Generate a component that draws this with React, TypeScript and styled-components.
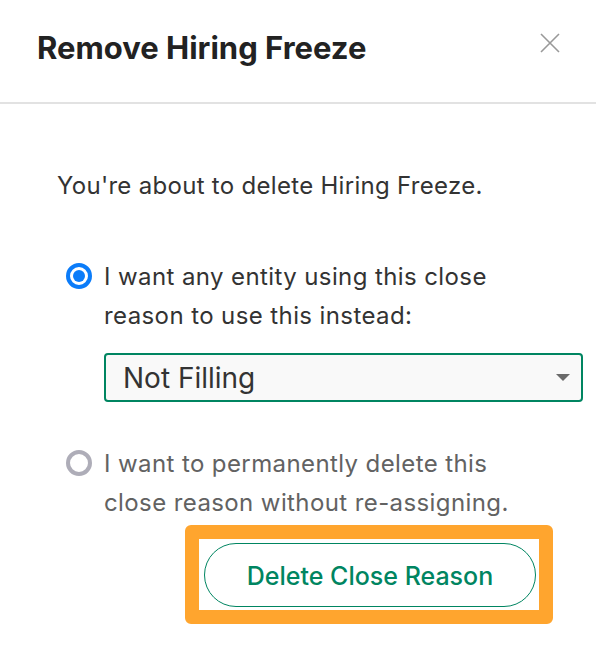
import React from "react";
import styled, { createGlobalStyle } from "styled-components";

const Global = createGlobalStyle`
  html, body { margin: 0; padding: 0; background: #ffffff; }
  body { font-family: Inter, "Noto Sans", sans-serif; }
  * { box-sizing: border-box; }
`;

const Modal = styled.div`
  width: 596px;
  height: 646px;
  background: #ffffff;
  display: flex;
  flex-direction: column;
`;

const Header = styled.header`
  height: 104px;
  border-bottom: 2px solid #e2e2e2;
  display: flex;
  align-items: flex-start;
  justify-content: space-between;
  padding: 27px 36px 0 37px;
`;

const Title = styled.h1`
  margin: 0;
  font-size: 31px;
  line-height: 42px;
  font-weight: 700;
  color: #222222;
  letter-spacing: 0px;
`;

const CloseButton = styled.button`
  border: none;
  background: none;
  padding: 0;
  margin-top: 6px;
  width: 20px;
  height: 20px;
  cursor: pointer;
  display: flex;
`;

const Body = styled.div`
  padding: 67px 0 0 57px;
  display: flex;
  flex-direction: column;
`;

const Intro = styled.p`
  margin: 0;
  font-size: 24px;
  line-height: 30px;
  letter-spacing: 0.3px;
  color: #333333;
`;

const Options = styled.div`
  margin-top: 56px;
  padding-left: 9px;
  display: flex;
  flex-direction: column;
`;

const OptionRow = styled.label<{ $gapTop?: number }>`
  display: flex;
  align-items: flex-start;
  gap: 12px;
  margin-top: ${(p) => p.$gapTop ?? 0}px;
  cursor: pointer;
`;

const Radio = styled.span<{ $checked?: boolean }>`
  flex: none;
  width: 26px;
  height: 26px;
  margin-top: 6px;
  border-radius: 50%;
  border: 4px solid ${(p) => (p.$checked ? "#0b7cf9" : "#aeadb8")};
  display: flex;
  align-items: center;
  justify-content: center;
  background: #ffffff;
  &::after {
    content: "";
    display: ${(p) => (p.$checked ? "block" : "none")};
    width: 12px;
    height: 12px;
    border-radius: 50%;
    background: #0b7cf9;
  }
`;

const OptionContent = styled.div`
  display: flex;
  flex-direction: column;
`;

const OptionText = styled.span<{ $muted?: boolean }>`
  font-size: 24px;
  line-height: 39px;
  letter-spacing: 0.4px;
  color: ${(p) => (p.$muted ? "#626262" : "#333333")};
`;

const Select = styled.div`
  margin-top: 18px;
  width: 479px;
  height: 49px;
  border: 2px solid #008561;
  border-radius: 4px;
  background: #f9f9f9;
  display: flex;
  align-items: center;
  justify-content: space-between;
  padding: 0 11px 0 17px;
`;

const SelectValue = styled.span`
  font-size: 28px;
  color: #333333;
`;

const Caret = styled.span`
  width: 0;
  height: 0;
  border-left: 7px solid transparent;
  border-right: 7px solid transparent;
  border-top: 7px solid #6a6a6a;
`;

const Highlight = styled.div`
  margin-top: 3px;
  margin-left: 128px;
  width: 368px;
  height: 99px;
  border: 14px solid #ffa52e;
  border-radius: 6px;
  padding: 4px 3px 3px 5px;
  display: flex;
`;

const OutlineButton = styled.button`
  flex: 1;
  border: 1.5px solid #008561;
  border-radius: 33px;
  background: #ffffff;
  color: #008561;
  font-family: Inter, "Noto Sans", sans-serif;
  font-size: 25px;
  font-weight: 500;
  padding-top: 3px;
  cursor: pointer;
`;

export default function App() {
  return (
    <>
      <Global />
      <Modal>
        <Header>
          <Title>Remove Hiring Freeze</Title>
          <CloseButton aria-label="Close">
            <svg width="20" height="20" viewBox="0 0 20 20">
              <path d="M1 1 L19 19 M19 1 L1 19" stroke="#999999" strokeWidth="1.6" fill="none" />
            </svg>
          </CloseButton>
        </Header>
        <Body>
          <Intro>You're about to delete Hiring Freeze.</Intro>
          <Options>
            <OptionRow>
              <Radio $checked />
              <OptionContent>
                <OptionText>I want any entity using this close</OptionText>
                <OptionText>reason to use this instead:</OptionText>
                <Select>
                  <SelectValue>Not Filling</SelectValue>
                  <Caret />
                </Select>
              </OptionContent>
            </OptionRow>
            <OptionRow $gapTop={42}>
              <Radio />
              <OptionContent>
                <OptionText $muted>I want to permanently delete this</OptionText>
                <OptionText $muted>close reason without re-assigning.</OptionText>
              </OptionContent>
            </OptionRow>
          </Options>
          <Highlight>
            <OutlineButton>Delete Close Reason</OutlineButton>
          </Highlight>
        </Body>
      </Modal>
    </>
  );
}
